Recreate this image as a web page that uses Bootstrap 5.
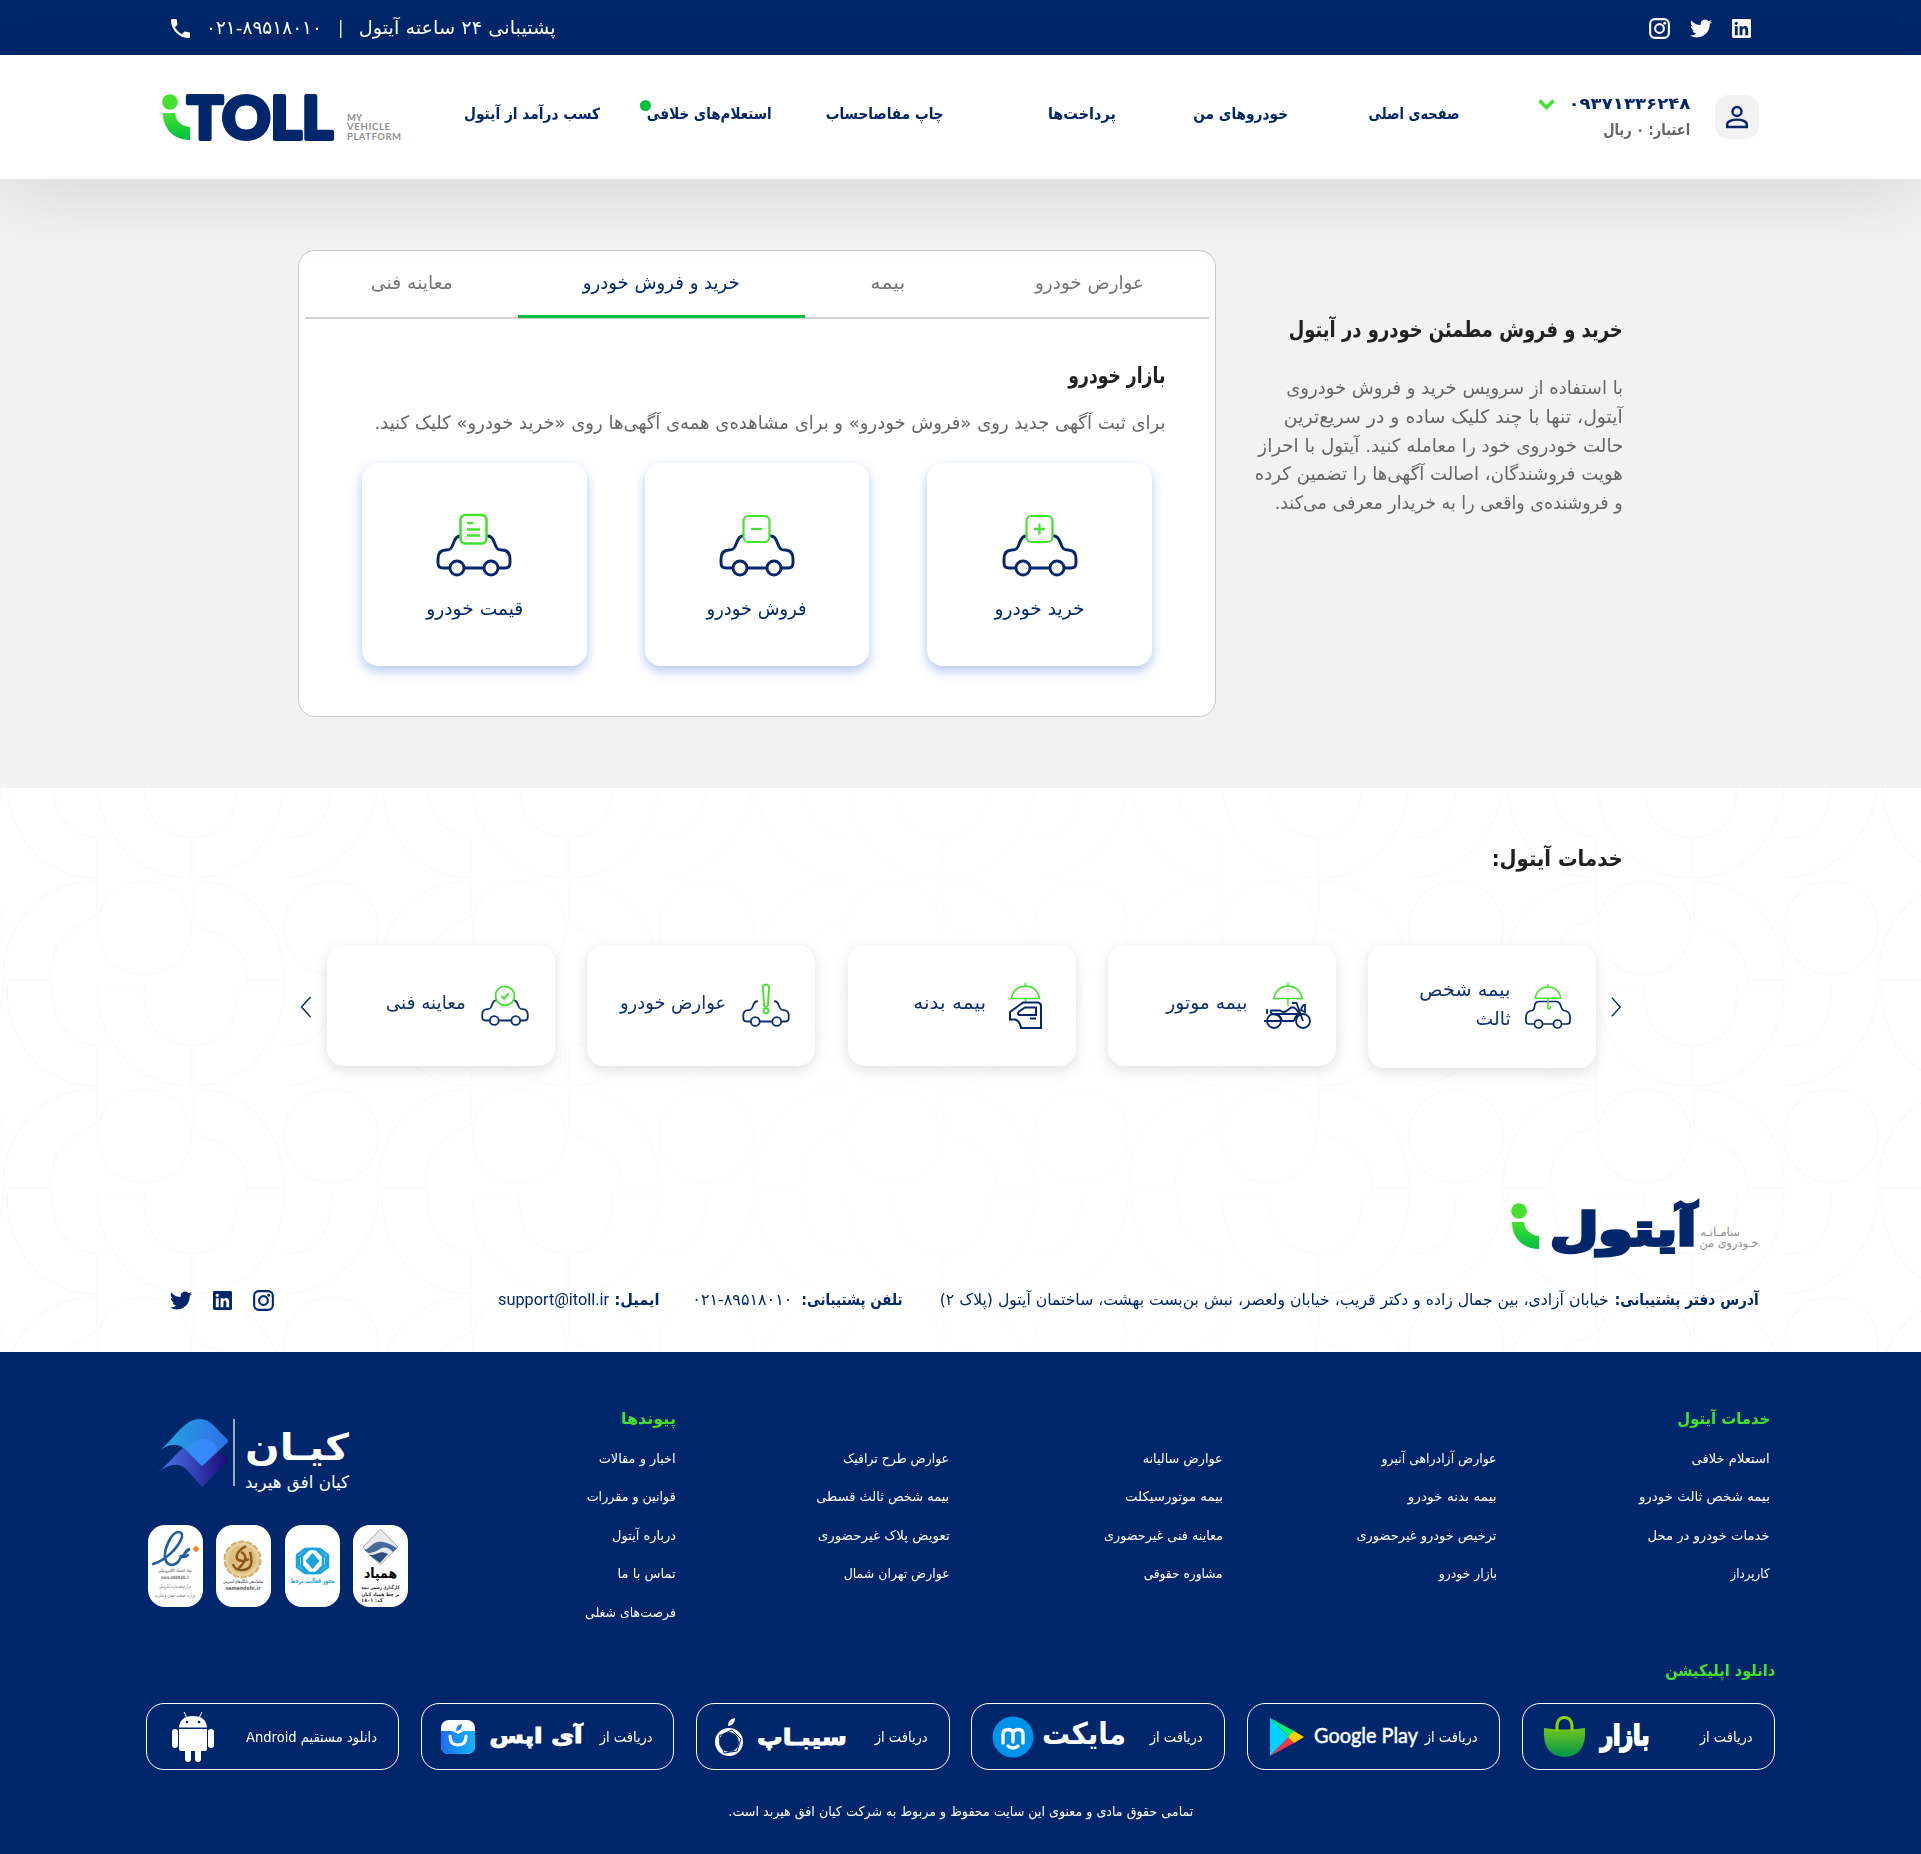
<!DOCTYPE html>
<html lang="fa" dir="rtl">
<head>
<meta charset="utf-8">
<meta name="viewport" content="width=device-width, initial-scale=1">
<title>آیتول</title>
<link href="https://cdn.jsdelivr.net/npm/bootstrap@5.3.0/dist/css/bootstrap.min.css" rel="stylesheet">
<style>
:root{--navy:#00276b;--lime:#44e12f;--grass:#00bf3f}
body{font-family:"DejaVu Sans","Liberation Sans",sans-serif;color:var(--navy);background:#fff;overflow-x:hidden}
svg{display:block;flex:none;overflow:visible}
svg text{font-family:"DejaVu Sans",sans-serif;font-weight:700}
a{color:inherit;text-decoration:none}
.fit{display:inline-block;white-space:nowrap;line-height:1;flex:none;text-align:right}
.fit>span{display:inline-block;transform-origin:100% 50%}
.topbar{height:55px;background:var(--navy);color:#fff;padding:2px 170px 0;font-size:18.5px}
.mainbar{height:124px;background:#fff;padding:0 162px;box-shadow:0 20px 70px rgba(0,0,0,.1);position:relative;z-index:2}
.avatar{width:44px;height:44px;border-radius:14px;background:#f2f2f2}
.mainnav{width:1032px;margin-right:79px;margin-top:-4px;font-size:15.5px;font-weight:700}
.mainnav a{width:172px;display:block;position:relative;right:-1px}
.newdot{position:absolute;width:11px;height:11px;border-radius:50%;background:var(--grass);right:121px;top:-3px}
.hero{height:609px;background:#f2f2f2;padding-top:71px}
.inner{width:1325px;margin:0 auto}
.intro{width:370px;padding-top:69px}
.intro h1,.panel h2,.services h2{font-weight:700;color:#212121;margin:0;font-size:22px;line-height:1}
.intro-text{color:#666;font-size:18.5px;margin-top:33px}
.intro-text .fit{display:block;height:28.8px;line-height:28.8px}
.panel{width:918px;height:467px;background:#fff;border:1px solid #c8c8c8;border-radius:17px;padding:0 6px}
.tabs{border-bottom:2px solid #d0d0d0;height:68px}
.tabs a{padding:0 65px;height:67px;color:#757575;font-size:18.5px;display:flex;align-items:center;border-bottom:3px solid transparent}
.tabs a.on{color:var(--navy);border-color:var(--grass)}
.panel-body{padding:46px 44px 0}
.panel-body p{color:#666;font-size:18.5px;margin:27px 0 0;line-height:1}
.tile{width:225px;height:203px;border-radius:16px;background:#fff;box-shadow:0 5px 12px rgba(20,80,200,.32);font-size:18.5px}
.services{height:380px;padding-top:60px}
.lower{position:relative;height:564px;overflow:hidden}
.bgart{position:absolute;inset:0;z-index:0;-webkit-mask-image:linear-gradient(90deg,#000,rgba(0,0,0,.25) 45%,rgba(0,0,0,.4) 60%,#000)}
.lower>*:not(.bgart){position:relative}
.svc{width:228px;height:121px;border-radius:17px;background:#fff;box-shadow:0 4px 14px rgba(0,0,0,.13);padding-right:25px;font-size:18.500px;color:#0e2f73}
.svc.tall{height:123px}
.svc .fit{margin-top:-4px}
.contact{padding:0 162px 0 169px;font-size:16px}
.contact b{font-weight:700}
.sitefoot{background:var(--navy);color:#fff;height:502px;padding:0 146px}
.fcol{width:273.5px;font-size:13.2px}
.fcol.last{width:268px}
.fcol a,.fcol h3{display:block;height:38.4px;margin:0;line-height:1}
.fcol h3,.dl-title{font-size:16px;font-weight:700;color:var(--lime)}
.fcol h3{height:41px}
.seal{width:55px;height:82px;border-radius:17px;background:#fff}
.store{width:253.3px;height:67px;border:1.5px solid #fff;border-radius:18px;font-size:14px;padding:0 21px}
.copy{font-size:13.500px}
</style>
</head>
<body>
<svg width="0" height="0" class="position-absolute">
<defs>
<linearGradient id="gi" x1="0" y1="0" x2="0" y2="1"><stop offset="0" stop-color="#44e12f"/><stop offset="1" stop-color="#00bf3f"/></linearGradient>
<linearGradient id="gk1" x1="0" y1="0" x2="1" y2="0"><stop offset="0" stop-color="#23a8e0"/><stop offset="1" stop-color="#2f6fe8"/></linearGradient>
<linearGradient id="gk2" x1="0" y1="0" x2="1" y2="0"><stop offset="0" stop-color="#4f7df2"/><stop offset="1" stop-color="#1b0a78"/></linearGradient>
<linearGradient id="gbag" x1="0" y1="0" x2="0" y2="1"><stop offset="0" stop-color="#6fc51c"/><stop offset="1" stop-color="#00964e"/></linearGradient>
<linearGradient id="gapp" x1="0" y1="0" x2="1" y2="0"><stop offset="0" stop-color="#1d6df0"/><stop offset="1" stop-color="#15b5f5"/></linearGradient>
<symbol id="linkedin" viewBox="0 0 20 20"><path fill="currentColor" fill-rule="evenodd" d="M1.5 0h17A1.5 1.5 0 0 1 20 1.5v17a1.5 1.5 0 0 1-1.5 1.5h-17A1.5 1.5 0 0 1 0 18.500v-17A1.500 1.500 0 0 1 1.500 0zM3 7.500V17h3V7.500zM4.500 2.800a1.750 1.750 0 1 0 0 3.500 1.750 1.750 0 0 0 0-3.500zM8 7.500V17h3v-5c0-2.600 3-2.700 3 0v5h3v-6c0-4.300-4.300-4.700-6-2.200V7.500z"/></symbol>
<symbol id="twitter" viewBox="0 0 24 20"><path fill="currentColor" d="M23.950 2.570a10 10 0 0 1-2.820.77 4.960 4.960 0 0 0 2.160-2.720c-.950.550-2 .950-3.120 1.180a4.920 4.920 0 0 0-8.390 4.480A13.930 13.930 0 0 1 1.640 1.160a4.920 4.920 0 0 0 1.520 6.570 4.900 4.900 0 0 1-2.230-.610v.060a4.920 4.920 0 0 0 3.950 4.830 4.990 4.990 0 0 1-2.210.080 4.940 4.940 0 0 0 4.600 3.420A9.870 9.870 0 0 1 0 17.540a13.990 13.990 0 0 0 7.550 2.210c9.050 0 14-7.500 14-13.980 0-.210 0-.420-.020-.630a9.940 9.940 0 0 0 2.420-2.570z"/></symbol>
<symbol id="instagram" viewBox="0 0 22 22"><rect x="1.200" y="1.200" width="19.600" height="19.600" rx="5" fill="none" stroke="currentColor" stroke-width="2.200"/><circle cx="11" cy="11" r="4.600" fill="none" stroke="currentColor" stroke-width="2.200"/><circle cx="16.500" cy="5.500" r="1.500" fill="currentColor"/></symbol>
<symbol id="phone" viewBox="0 0 18 18"><path fill="currentColor" d="M3.620 7.790a15.150 15.150 0 0 0 6.590 6.590l2.200-2.200c.280-.280.670-.360 1.020-.250 1.120.370 2.320.570 3.570.570a1 1 0 0 1 1 1V17a1 1 0 0 1-1 1A17 17 0 0 1 0 1a1 1 0 0 1 1-1h3.500a1 1 0 0 1 1 1c0 1.250.200 2.450.570 3.570a1 1 0 0 1-.250 1.020z"/></symbol>
<symbol id="car" viewBox="0 0 76 66"><path fill="none" stroke="currentColor" stroke-width="2.900" stroke-linecap="round" stroke-linejoin="round" d="M24 24C20.500 24 19 26.500 17.500 31 15.500 37 14 38 10 38 4.500 38 2 41 2 47V51Q2 56 7 56H13M29 56H47M63 56H69Q74 56 74 51V47C74 41 71.500 38 66 38 62 38 60.500 37 58.500 31 57 26.500 55.500 24 52 24"/><g fill="#fff" stroke="currentColor" stroke-width="2.900"><circle cx="21" cy="56" r="7"/><circle cx="55" cy="56" r="7"/></g></symbol>
<symbol id="umb" viewBox="0 0 32 24"><path fill="none" stroke="#44e12f" stroke-width="1.700" d="M16 0V3M2 15.500C3 7.500 9 3.200 16 3.200S29 7.500 30 15.500Z"/></symbol>
<pattern id="tilework" width="375" height="208" patternUnits="userSpaceOnUse" patternTransform="translate(97 -10)"><g fill="none" stroke="#f7f7f7" stroke-width="1.200"><circle cx="47" cy="150" r="47"/><circle cx="234" cy="150" r="47"/><path d="M97 103C150 103 187 145 187 202H150C150 172 134 160 106 150Q97 147 97 138ZM281 202C281 145 318 103 375 103V138C345 150 328 165 328 202ZM0 0C0 57 40 100 94 100V60C60 55 47 40 47 0ZM187 0C187 57 147 100 97 100V60C130 55 140 40 140 0ZM187 60C220 60 234 40 234 0M281 0C281 50 240 98 190 100M285 0C285 57 320 100 375 100V60C340 55 330 30 330 0"/></g></pattern>
</defs>
</svg>

<div class="topbar d-flex align-items-center justify-content-between">
  <div class="d-flex align-items-center" style="gap:20px">
    <svg width="19" height="19"><use href="#linkedin"/></svg>
    <svg width="22" height="19"><use href="#twitter"/></svg>
    <svg width="21" height="21"><use href="#instagram"/></svg>
  </div>
  <div class="d-flex align-items-center">
    <span class="fit" data-w="197">پشتیبانی ۲۴ ساعته آیتول</span>
    <span class="fit ms-3 me-3" data-w="5">|</span>
    <span class="fit" data-w="116" dir="rtl">۰۲۱-۸۹۵۱۸۰۱۰</span>
    <svg width="19" height="19" class="me-3" style="margin-left:1px"><use href="#phone"/></svg>
  </div>
</div>

<header class="mainbar d-flex align-items-center">
  <div class="avatar d-flex align-items-center justify-content-center">
    <svg width="24" height="24" viewBox="0 0 24 24" fill="none" stroke="#00276b" stroke-width="2.400"><circle cx="12" cy="6.500" r="4.500"/><path d="M2.200 22V19.500C2.200 16.500 7 14.600 12 14.600S21.800 16.500 21.800 19.500V22Z"/></svg>
  </div>
  <div style="width:152px;margin-right:25px;padding-top:4px">
    <div class="d-flex align-items-center fw-bold" style="gap:13px;font-size:16px"><span class="fit" data-w="122">۰۹۳۷۱۳۳۶۲۴۸</span>
      <svg width="17" height="11" viewBox="0 0 17 11"><path d="M1.500 1.500 8.500 8.500 15.500 1.500" fill="none" stroke="#44e12f" stroke-width="3.400"/></svg></div>
    <div class="fw-bold" style="font-size:16px;color:#666;margin-top:6px"><span class="fit" data-w="87">اعتبار: ۰ ریال</span></div>
  </div>
  <nav class="mainnav d-flex align-items-center">
    <a href="#"><span class="fit" data-w="91">صفحه‌ی اصلی</span></a>
    <a href="#"><span class="fit" data-w="95">خودروهای من</span></a>
    <a href="#"><span class="fit" data-w="68">پرداخت‌ها</span></a>
    <a href="#"><span class="fit" data-w="118">چاپ مفاصاحساب</span></a>
    <a href="#"><span class="fit" data-w="125">استعلام‌های خلافی</span><i class="newdot"></i></a>
    <a href="#"><span class="fit" data-w="136">کسب درآمد از آیتول</span></a>
  </nav>
  <svg class="me-auto" width="240" height="47" viewBox="0 0 240 47" direction="ltr">
    <circle cx="8" cy="8" r="7.800" fill="#44e12f"/><path d="M1 19H13C14 27 19 32 28 33V46C12 46 1 35 1 19Z" fill="url(#gi)"/>
    <text x="25" y="44.500" font-size="59" textLength="146" lengthAdjust="spacingAndGlyphs" fill="#00276b" stroke="#00276b" stroke-width="4" stroke-linejoin="round" style="font-family:Lato,sans-serif;font-weight:900;direction:ltr">TOLL</text>
    <g font-size="9.500" fill="#8f8f8f"><text style="font-family:Lato;direction:ltr" x="185" y="26.500">MY</text><text style="font-family:Lato;direction:ltr" x="185" y="36" textLength="43">VEHICLE</text><text style="font-family:Lato;direction:ltr" x="185" y="45.500" textLength="54">PLATFORM</text></g>
  </svg>
</header>

<section class="hero">
  <div class="inner d-flex justify-content-between">
    <div class="intro">
      <h1><span class="fit" data-w="334">خرید و فروش مطمئن خودرو در آیتول</span></h1>
      <div class="intro-text">
        <span class="fit" data-w="337">با استفاده از سرویس خرید و فروش خودروی</span>
        <span class="fit" data-w="339">آیتول، تنها با چند کلیک ساده و در سریع‌ترین</span>
        <span class="fit" data-w="365">حالت خودروی خود را معامله کنید. آیتول با احراز</span>
        <span class="fit" data-w="368">هویت فروشندگان، اصالت آگهی‌ها را تضمین کرده</span>
        <span class="fit" data-w="348">و فروشنده‌ی واقعی را به خریدار معرفی می‌کند.</span>
      </div>
    </div>
    <div class="panel">
      <div class="tabs d-flex">
        <a href="#"><span class="fit" data-w="109">عوارض خودرو</span></a>
        <a href="#"><span class="fit" data-w="35">بیمه</span></a>
        <a href="#" class="on"><span class="fit" data-w="157">خرید و فروش خودرو</span></a>
        <a href="#"><span class="fit" data-w="82">معاینه فنی</span></a>
      </div>
      <div class="panel-body">
        <h2><span class="fit" data-w="97">بازار خودرو</span></h2>
        <p><span class="fit" data-w="791">برای ثبت آگهی جدید روی «فروش خودرو» و برای مشاهده‌ی همه‌ی آگهی‌ها روی «خرید خودرو» کلیک کنید.</span></p>
        <div class="d-flex" style="gap:58px;margin:30px 13px 0">
          <a class="tile d-flex flex-column align-items-center" href="#">
            <svg width="76" height="66" style="margin:49px 0 22px"><use href="#car"/><rect x="24.500" y="4" width="26" height="26" rx="5" fill="#fff" stroke="#44e12f" stroke-width="2.200"/><path d="M37.500 11.500V22.500M32 17H43" stroke="#44e12f" stroke-width="2.300"/></svg>
            <span class="fit" data-w="90">خرید خودرو</span></a>
          <a class="tile d-flex flex-column align-items-center" href="#">
            <svg width="76" height="66" style="margin:49px 0 22px"><use href="#car"/><rect x="24.500" y="4" width="26" height="26" rx="5" fill="#fff" stroke="#44e12f" stroke-width="2.200"/><path d="M32 17H43" stroke="#44e12f" stroke-width="2.300"/></svg>
            <span class="fit" data-w="100">فروش خودرو</span></a>
          <a class="tile d-flex flex-column align-items-center" href="#">
            <svg width="76" height="66" style="margin:49px 0 22px"><use href="#car"/><rect x="24.500" y="3" width="26" height="28.500" rx="5" fill="#fff" stroke="#44e12f" stroke-width="2.600"/><path d="M31 11H37M31 17.500H44M31 23.500H44" stroke="#44e12f" stroke-width="2.400"/></svg>
            <span class="fit" data-w="97">قیمت خودرو</span></a>
        </div>
      </div>
    </div>
  </div>
</section>

<div class="lower">
  <svg class="bgart" width="1921" height="564"><rect width="1921" height="564" fill="url(#tilework)"/></svg>
  <section class="services inner">
    <h2><span class="fit" data-w="131">خدمات آیتول:</span></h2>
    <div class="d-flex align-items-start justify-content-between" style="margin-top:75px">
      <svg width="13" height="22" viewBox="0 0 14 22" style="margin-top:51px"><path d="M2 1 11 11 2 21" fill="none" stroke="#00276b" stroke-width="1.400"/></svg>
      <div class="d-flex align-items-start" style="gap:32.300px">
        <a class="svc tall d-flex align-items-center" style="gap:15px" href="#">
          <svg width="46" height="45" viewBox="0 0 46 45"><path d="M10 20C11 18 12 17.500 14 17.500H31C33 17.500 34 18 35 20L37 25C38 27 39 27 41 27 44 28 45 30 45 33V37Q45 40 42 40H4Q1 40 1 37V33C1 30 2 28 5 27 7 27 8 27 9 25Z" fill="none" stroke="#00276b" stroke-width="1.700"/><g fill="#fff" stroke="#00276b" stroke-width="1.700"><circle cx="13.500" cy="40" r="4"/><circle cx="32.500" cy="40" r="4"/></g><use href="#umb" x="8.500" y="0" width="29" height="22"/><path d="M23 14V24.500Q25.500 25.500 25.500 22" fill="none" stroke="#44e12f" stroke-width="1.500"/></svg>
          <span class="d-flex flex-column" style="gap:14px"><span class="fit" data-w="91">بیمه شخص</span><span class="fit" data-w="35">ثالث</span></span></a>
        <a class="svc d-flex align-items-center" style="gap:15px" href="#">
          <svg width="48" height="46" viewBox="0 0 48 46"><g fill="none" stroke="#00276b" stroke-width="1.800"><circle cx="11" cy="38" r="7"/><circle cx="40" cy="38" r="7"/><path d="M1 38H31M4 26V31M40 38 33.500 20H29M8 27.500H17Q19 29 21 29T28 24.500H31C34 26 35 29 36 31H10Q7 30 8 27.500ZM8 31Q18 31 19 38M38 31Q32 32 31 38M38 27Q39 22 42 22V29Z"/></g><use href="#umb" x="9" y="0" width="32" height="24"/><path d="M25 15V23" stroke="#44e12f" stroke-width="1.500"/></svg>
          <span class="fit" data-w="81">بیمه موتور</span></a>
        <a class="svc d-flex align-items-center" style="gap:22px;padding-right:34px" href="#">
          <svg width="33" height="46" viewBox="0 0 33 46"><use href="#umb" x=".5" y="0" width="32" height="24"/><path d="M16.500 15V20" stroke="#44e12f" stroke-width="1.500"/><g fill="none" stroke="#00276b" stroke-width="2"><path d="M14 19.500H28Q32 19.500 32 23V45H12Q11 38 6 36.500H1V29Z"/><path d="M16 24.500H27V32H10Q8 30 10 28.500Z"/><path d="M21 35.500H27"/></g></svg>
          <span class="fit" data-w="73">بیمه بدنه</span></a>
        <a class="svc d-flex align-items-center" style="gap:16px" href="#">
          <svg width="48" height="44" viewBox="0 -3 76 69"><use href="#car" width="76" height="66"/><path d="M33 0Q38-5 43 0L41 31Q38 34 35 31Z" fill="#fff" stroke="#44e12f" stroke-width="3"/><circle cx="38" cy="39" r="4" fill="#fff" stroke="#44e12f" stroke-width="3"/></svg>
          <span class="fit" data-w="106">عوارض خودرو</span></a>
        <a class="svc d-flex align-items-center" style="gap:15px;padding-right:26px" href="#">
          <svg width="48" height="42" viewBox="0 0 76 66"><use href="#car" width="76" height="66"/><circle cx="38" cy="17" r="15" fill="#fff" stroke="#44e12f" stroke-width="3"/><path d="M32 17 36.500 21.500 44 12.500" fill="none" stroke="#44e12f" stroke-width="3"/></svg>
          <span class="fit" data-w="80">معاینه فنی</span></a>
      </div>
      <svg width="15" height="22" viewBox="0 0 14 22" style="margin-top:51px"><path d="M12 1 3 11 12 21" fill="none" stroke="#00276b" stroke-width="1.400"/></svg>
    </div>
  </section>
  <section class="contact">
    <svg width="249" height="58" viewBox="0 0 249 58" style="margin-top:35px;margin-right:-1px">
      <circle cx="8" cy="8" r="7.800" fill="#44e12f"/><path d="M1 19H13C14 27 19 32 28 33V46C12 46 1 35 1 19Z" fill="url(#gi)"/>
      <text x="112" y="42" text-anchor="middle" font-size="45" textLength="146" lengthAdjust="spacingAndGlyphs" fill="#00276b" stroke="#00276b" stroke-width="3.500">آیتول</text>
      <g font-size="11.500" fill="#8f8f8f"><text x="209" y="33" text-anchor="middle" style="font-weight:400" textLength="40" lengthAdjust="spacingAndGlyphs">سامـانـه</text><text x="218" y="44" text-anchor="middle" style="font-weight:400" textLength="59" lengthAdjust="spacingAndGlyphs">خـودروی من</text></g>
    </svg>
    <div class="d-flex align-items-center justify-content-between" style="margin-top:27px">
      <div class="d-flex align-items-center">
        <b class="fit" data-w="144">آدرس دفتر پشتیبانی:</b>
        <span class="fit" data-w="669" style="margin-right:6px">خیابان آزادی، بین جمال زاده و دکتر قریب، خیابان ولعصر، نبش بن‌بست بهشت، ساختمان آیتول (پلاک ۲)</span>
        <b class="fit" data-w="101" style="margin-right:37px">تلفن پشتیبانی:</b>
        <span class="fit" data-w="100" style="margin-right:10px">۰۲۱-۸۹۵۱۸۰۱۰</span>
        <b class="fit" data-w="45" style="margin-right:33px">ایمیل:</b>
        <span class="fit" data-w="111" style="margin-right:5px;font-family:Roboto,sans-serif">support@itoll.ir</span>
      </div>
      <div class="d-flex align-items-center" style="gap:21px;margin-top:2px;margin-left:1px">
        <svg width="21" height="21"><use href="#instagram"/></svg>
        <svg width="19" height="19"><use href="#linkedin"/></svg>
        <svg width="22" height="19"><use href="#twitter"/></svg>
      </div>
    </div>
  </section>
</div>

<footer class="sitefoot">
  <div class="d-flex" style="height:306px;padding:59px 5px 0 0">
    <div class="fcol"><h3><span class="fit" data-w="93">خدمات آیتول</span></h3>
      <a href="#"><span class="fit" data-w="78">استعلام خلافی</span></a><a href="#"><span class="fit" data-w="131">بیمه شخص ثالث خودرو</span></a><a href="#"><span class="fit" data-w="122">خدمات خودرو در محل</span></a><a href="#"><span class="fit" data-w="39">کارپرداز</span></a></div>
    <div class="fcol"><h3></h3>
      <a href="#"><span class="fit" data-w="115">عوارض آزادراهی آنیرو</span></a><a href="#"><span class="fit" data-w="89">بیمه بدنه خودرو</span></a><a href="#"><span class="fit" data-w="140">ترخیص خودرو غیرحضوری</span></a><a href="#"><span class="fit" data-w="58">بازار خودرو</span></a></div>
    <div class="fcol"><h3></h3>
      <a href="#"><span class="fit" data-w="80">عوارض سالیانه</span></a><a href="#"><span class="fit" data-w="98">بیمه موتورسیکلت</span></a><a href="#"><span class="fit" data-w="119">معاینه فنی غیرحضوری</span></a><a href="#"><span class="fit" data-w="79">مشاوره حقوقی</span></a></div>
    <div class="fcol"><h3></h3>
      <a href="#"><span class="fit" data-w="106">عوارض طرح ترافیک</span></a><a href="#"><span class="fit" data-w="133">بیمه شخص ثالث قسطی</span></a><a href="#"><span class="fit" data-w="132">تعویض پلاک غیرحضوری</span></a><a href="#"><span class="fit" data-w="106">عوارض تهران شمال</span></a></div>
    <div class="fcol last"><h3><span class="fit" data-w="55">پیوندها</span></h3>
      <a href="#"><span class="fit" data-w="77">اخبار و مقالات</span></a><a href="#"><span class="fit" data-w="89">قوانین و مقررات</span></a><a href="#"><span class="fit" data-w="64">درباره آیتول</span></a><a href="#"><span class="fit" data-w="58">تماس با ما</span></a><a href="#"><span class="fit" data-w="91">فرصت‌های شغلی</span></a></div>
    <div style="width:262px;padding-top:8px">
      <svg width="204" height="78" viewBox="-12 0 204 78" style="margin-right:58px">
        <path d="M0 53C14 43 24 24 40 21L69 38Q71 41 69 44L44 68 28 50Q17 40 0 53Z" fill="url(#gk2)"/>
        <path d="M0 33C15 22 25 0 42 0 53 0 58 10 69 20Q71 22 69 24L44 47 27 30Q15 20 0 33Z" fill="url(#gk1)"/>
        <path d="M28 31Q42 12 57 25L60 32 44 47Z" fill="#3b8cff" opacity=".7"/>
        <path d="M76 0V67" stroke="#fff" stroke-width="1.200"/>
        <text x="139" y="41" text-anchor="middle" font-size="37" textLength="104" lengthAdjust="spacingAndGlyphs" fill="#fff">کیـان</text>
        <text x="139" y="69" text-anchor="middle" font-size="17" textLength="104" lengthAdjust="spacingAndGlyphs" fill="#fff" style="font-weight:400">کیان افق هیربد</text>
      </svg>
      <div class="d-flex justify-content-between" style="margin:28px 0 0 0;padding:0 0 0 2px">
        <div class="seal"><svg width="55" height="82" viewBox="0 0 55 82"><path d="M27.500 4 45 22 27.500 40 10 22Z" fill="#e9e9e9" stroke="#999" stroke-width=".8" stroke-linejoin="round"/><path d="M11 25C18 24 19 15 30 17Q36 18 44 23L40 27Q33 20 27 24T15 28Z" fill="#46699a"/><path d="M16 30C24 31 26 24 35 29L27 38Z" fill="#2d4f83"/><text x="27.500" y="53" text-anchor="middle" font-size="14" textLength="33" lengthAdjust="spacingAndGlyphs">همپاد</text><g font-size="5" fill="#222"><text x="27.500" y="64" text-anchor="middle" textLength="38" lengthAdjust="spacingAndGlyphs">کارگذاری رسمی بیمه</text><text x="27.500" y="70.500" text-anchor="middle" textLength="38" lengthAdjust="spacingAndGlyphs">بر خط همپاد کیان</text><text x="19" y="77" text-anchor="middle">کد: ۱۸۰۱</text></g></svg></div>
        <div class="seal"><svg width="55" height="82" viewBox="0 0 55 82" fill="none" stroke="#1ba3e0"><path d="M20 24H24L14 32V40L24 48H20L12 42V30ZM35 24H31L41 32V40L31 48H35L43 42V30Z" stroke-width="2.500"/><path d="M24 24H31L38 31V41L31 48H24L17 41V31Z" stroke-width="2.400"/><path d="M27.500 28.500 34 36 27.500 43.500 21 36Z" fill="#1ba3e0"/><text x="27.500" y="57.500" text-anchor="middle" font-size="7" textLength="44" lengthAdjust="spacingAndGlyphs" fill="#1ba3e0" stroke="none">مجوز فعالیت برخط</text></svg></div>
        <div class="seal"><svg width="55" height="82" viewBox="0 0 55 82"><circle cx="26.500" cy="34.500" r="18" fill="#e6cf9c" stroke="#cfae6a" stroke-width="2" stroke-dasharray="6 2"/><circle cx="26.500" cy="34.500" r="14" fill="#dcc07f"/><path d="M30 21Q19 27 21 34 26 38 33 34M34 27Q39 44 27 45 19 46 17 39M25 27Q35 32 22 44" fill="none" stroke="#8a5518" stroke-width="2.400"/><text x="27" y="58" text-anchor="middle" font-size="4.500" fill="#555" textLength="40" lengthAdjust="spacingAndGlyphs">ساماندهی پایگاه‌های اینترنتی</text><text x="27" y="65" text-anchor="middle" font-size="5.500" fill="#666" style="direction:ltr" textLength="35" lengthAdjust="spacingAndGlyphs">samandehi.ir</text></svg></div>
        <div class="seal"><svg width="55" height="82" viewBox="0 0 55 82"><path d="M5 39C16 36 30 24 34 12 35 5 27 5 22 14 15 27 15 38 23 40 30 40 33 33 33 30Q35 34 40 30" fill="none" stroke="#1f5f9f" stroke-width="2.600" stroke-linecap="round"/><path d="M35 32Q38 25 42 24" stroke="#1f5f9f" stroke-width="3"/><path d="M48 20.500 51.500 24 48 27.500 44.500 24Z" fill="#f5871f"/><g font-size="4.500" fill="#777"><text x="27" y="47" text-anchor="middle" textLength="34" lengthAdjust="spacingAndGlyphs">نماد اعتماد الکترونیکی</text><text x="27" y="54" text-anchor="middle" style="direction:ltr" textLength="28" lengthAdjust="spacingAndGlyphs">www.eNAMAD.ir</text></g><g font-size="6" fill="#777"><text x="27" y="63" text-anchor="middle" textLength="32" lengthAdjust="spacingAndGlyphs" style="font-weight:400">مرکز توسعه تجارت الکترونیکی</text><text x="27" y="72" text-anchor="middle" textLength="40" lengthAdjust="spacingAndGlyphs" style="font-weight:400">وزارت صنعت، معدن و تجارت</text></g></svg></div>
      </div>
    </div>
  </div>
  <div class="dl-title" style="height:45px;padding-top:1px"><span class="fit" data-w="110">دانلود اپلیکیشن</span></div>
  <div class="d-flex justify-content-between">
    <a class="store d-flex align-items-center" href="#"><span class="fit" data-w="53">دریافت از</span>
      <svg class="me-auto" width="108" height="42" viewBox="0 0 108 42"><path d="M0 12Q20 15 41 12Q43 40 20.500 41-2 40 0 12Z" fill="url(#gbag)"/><path d="M13 15V9Q14 1.500 20.500 1.500T28 9V15" fill="none" stroke="#8fd400" stroke-width="3"/><text x="81" y="29" text-anchor="middle" font-size="28" textLength="49" lengthAdjust="spacingAndGlyphs" fill="#fff" stroke="#fff" stroke-width="2">بازار</text></svg></a>
    <a class="store d-flex align-items-center" href="#"><span class="fit" data-w="53">دریافت از</span>
      <svg class="me-auto" width="150" height="40" viewBox="0 0 150 40"><path d="M1 1V39L20 20Z" fill="#00d2ff"/><path d="M1 1 25 14 20 20Z" fill="#00f076"/><path d="M1 39 25 26 20 20Z" fill="#f8354c"/><path d="M25 14 35 20 25 26 19 20Z" fill="#ffcf00"/><text x="45" y="26" font-size="21" textLength="104" lengthAdjust="spacingAndGlyphs" fill="#fff" style="direction:ltr;font-family:Lato;font-weight:400" stroke="#fff" stroke-width=".5">Google Play</text></svg></a>
    <a class="store d-flex align-items-center" href="#"><span class="fit" data-w="53">دریافت از</span>
      <svg class="me-auto" width="136" height="42" viewBox="-3 0 136 42"><circle cx="17" cy="21" r="20.500" fill="#0091ea"/><path d="M7 27V18Q7 13.500 12 13.500T17 18V26M17 18Q17 13.500 22 13.500T27 18V27M12 30Q17 34 22 30" fill="none" stroke="#fff" stroke-width="3.400" stroke-linecap="round"/><text x="88" y="28" text-anchor="middle" font-size="30" textLength="84" lengthAdjust="spacingAndGlyphs" fill="#fff">مایکت</text></svg></a>
    <a class="store d-flex align-items-center" href="#"><span class="fit" data-w="53">دریافت از</span>
      <svg class="me-auto" width="130" height="40" viewBox="3 0 130 40"><circle cx="14" cy="25" r="12" fill="none" stroke="#fff" stroke-width="4"/><path d="M4 19 17 13 26 22 22 34 9 36Z" fill="none" stroke="#00276b" stroke-width="1"/><path d="M13 9Q13 2 20 1 20 8 13 9Z" fill="#fff"/><text x="87" y="28" text-anchor="middle" font-size="22" textLength="90" lengthAdjust="spacingAndGlyphs" fill="#fff" stroke="#fff">سیبـاپ</text></svg></a>
    <a class="store d-flex align-items-center" href="#"><span class="fit" data-w="53">دریافت از</span>
      <svg class="me-auto" width="144" height="36" viewBox="3 0 144 36"><rect y="1" width="34" height="34" rx="8" x="1" fill="#fff"/><path d="M1 12H12L18 15 24 12H35V27Q35 35 27 35H9Q1 35 1 27Z" fill="url(#gapp)"/><path d="M16 12Q16 6 22 5 22 12 16 12Z" fill="#1686f5"/><path d="M10 17Q10 26 18 26T26 17" fill="none" stroke="#fff" stroke-width="3" stroke-linecap="round"/><text x="96" y="24" text-anchor="middle" font-size="21" textLength="93" lengthAdjust="spacingAndGlyphs" fill="#fff" stroke="#fff">آی اپس</text></svg></a>
    <a class="store d-flex align-items-center" href="#"><span class="fit" data-w="131">دانلود مستقیم Android</span>
      <svg class="me-auto" width="47" height="50" viewBox="-3 0 47 50" fill="#fff"><path d="M8 15.500Q9 4 22 4T36 15.500ZM8 17H36V37Q36 39 34 39H10Q8 39 8 37ZM14 38H20V47Q20 50 17 50T14 47ZM24 38H30V47Q30 50 27 50T24 47Z"/><rect x="1" y="17" width="6" height="19" rx="3"/><rect x="37" y="17" width="6" height="19" rx="3"/><path d="M13 0 16 6M31 0 28 6" stroke="#fff"/><circle cx="16" cy="10" r="1.300" fill="#00276b"/><circle cx="28" cy="10" r="1.300" fill="#00276b"/></svg></a>
  </div>
  <div class="copy text-center" style="padding-top:31px"><span class="fit" data-w="465">تمامی حقوق مادی و معنوی این سایت محفوظ و مربوط به شرکت کیان افق هیربد است.</span></div>
</footer>

<script src="https://cdn.jsdelivr.net/npm/bootstrap@5.3.0/dist/js/bootstrap.bundle.min.js"></script>
<script>
document.querySelectorAll('.fit[data-w]').forEach(function (el) {
  var inner = document.createElement('span');
  while (el.firstChild) inner.appendChild(el.firstChild);
  el.appendChild(inner);
  var natural = inner.getBoundingClientRect().width, target = +el.dataset.w;
  el.style.width = target + 'px';
  inner.style.transform = 'scaleX(' + (target / natural) + ')';
});
</script>
</body>
</html>
